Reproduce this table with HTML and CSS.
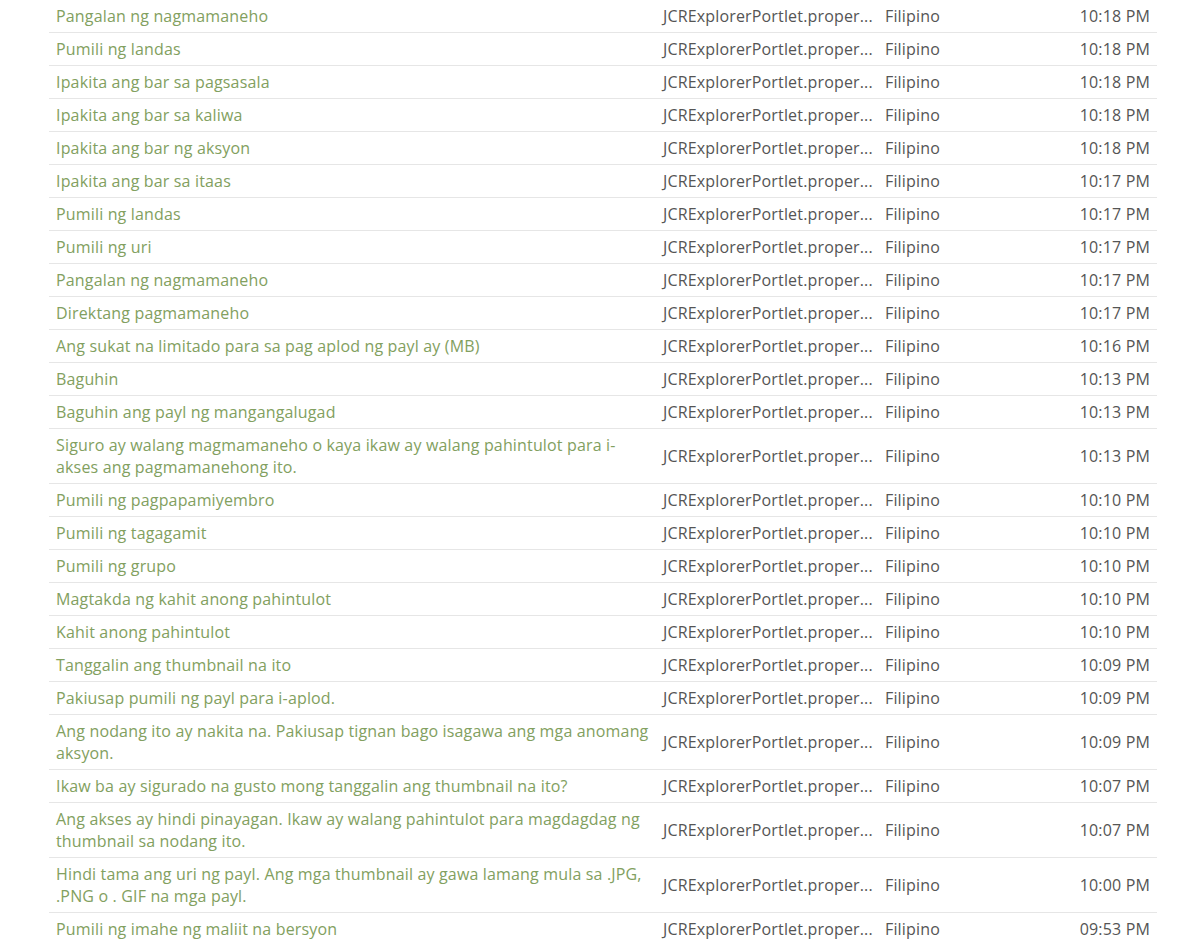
FILE: index.html
```html
<!DOCTYPE html>
<html>
<head>
<meta charset="utf-8">
<link rel="stylesheet" href="styles.css">
</head>
<body>
<div class="wrap">
<table class="list">
<colgroup><col class="c1"><col class="c2"><col class="c3"><col class="c4"></colgroup>
<tbody>
<tr><td class="key"><a href="#">Pangalan ng nagmamaneho</a></td><td class="file">JCRExplorerPortlet.proper...</td><td class="lang">Filipino</td><td class="time">10:18 PM</td></tr>
<tr><td class="key"><a href="#">Pumili ng landas</a></td><td class="file">JCRExplorerPortlet.proper...</td><td class="lang">Filipino</td><td class="time">10:18 PM</td></tr>
<tr><td class="key"><a href="#">Ipakita ang bar sa pagsasala</a></td><td class="file">JCRExplorerPortlet.proper...</td><td class="lang">Filipino</td><td class="time">10:18 PM</td></tr>
<tr><td class="key"><a href="#">Ipakita ang bar sa kaliwa</a></td><td class="file">JCRExplorerPortlet.proper...</td><td class="lang">Filipino</td><td class="time">10:18 PM</td></tr>
<tr><td class="key"><a href="#">Ipakita ang bar ng aksyon</a></td><td class="file">JCRExplorerPortlet.proper...</td><td class="lang">Filipino</td><td class="time">10:18 PM</td></tr>
<tr><td class="key"><a href="#">Ipakita ang bar sa itaas</a></td><td class="file">JCRExplorerPortlet.proper...</td><td class="lang">Filipino</td><td class="time">10:17 PM</td></tr>
<tr><td class="key"><a href="#">Pumili ng landas</a></td><td class="file">JCRExplorerPortlet.proper...</td><td class="lang">Filipino</td><td class="time">10:17 PM</td></tr>
<tr><td class="key"><a href="#">Pumili ng uri</a></td><td class="file">JCRExplorerPortlet.proper...</td><td class="lang">Filipino</td><td class="time">10:17 PM</td></tr>
<tr><td class="key"><a href="#">Pangalan ng nagmamaneho</a></td><td class="file">JCRExplorerPortlet.proper...</td><td class="lang">Filipino</td><td class="time">10:17 PM</td></tr>
<tr><td class="key"><a href="#">Direktang pagmamaneho</a></td><td class="file">JCRExplorerPortlet.proper...</td><td class="lang">Filipino</td><td class="time">10:17 PM</td></tr>
<tr><td class="key"><a href="#">Ang sukat na limitado para sa pag aplod ng payl ay (MB)</a></td><td class="file">JCRExplorerPortlet.proper...</td><td class="lang">Filipino</td><td class="time">10:16 PM</td></tr>
<tr><td class="key"><a href="#">Baguhin</a></td><td class="file">JCRExplorerPortlet.proper...</td><td class="lang">Filipino</td><td class="time">10:13 PM</td></tr>
<tr><td class="key"><a href="#">Baguhin ang payl ng mangangalugad</a></td><td class="file">JCRExplorerPortlet.proper...</td><td class="lang">Filipino</td><td class="time">10:13 PM</td></tr>
<tr><td class="key"><a href="#">Siguro ay walang magmamaneho o kaya ikaw ay walang pahintulot para i-akses ang pagmamanehong ito.</a></td><td class="file">JCRExplorerPortlet.proper...</td><td class="lang">Filipino</td><td class="time">10:13 PM</td></tr>
<tr><td class="key"><a href="#">Pumili ng pagpapamiyembro</a></td><td class="file">JCRExplorerPortlet.proper...</td><td class="lang">Filipino</td><td class="time">10:10 PM</td></tr>
<tr><td class="key"><a href="#">Pumili ng tagagamit</a></td><td class="file">JCRExplorerPortlet.proper...</td><td class="lang">Filipino</td><td class="time">10:10 PM</td></tr>
<tr><td class="key"><a href="#">Pumili ng grupo</a></td><td class="file">JCRExplorerPortlet.proper...</td><td class="lang">Filipino</td><td class="time">10:10 PM</td></tr>
<tr><td class="key"><a href="#">Magtakda ng kahit anong pahintulot</a></td><td class="file">JCRExplorerPortlet.proper...</td><td class="lang">Filipino</td><td class="time">10:10 PM</td></tr>
<tr><td class="key"><a href="#">Kahit anong pahintulot</a></td><td class="file">JCRExplorerPortlet.proper...</td><td class="lang">Filipino</td><td class="time">10:10 PM</td></tr>
<tr><td class="key"><a href="#">Tanggalin ang thumbnail na ito</a></td><td class="file">JCRExplorerPortlet.proper...</td><td class="lang">Filipino</td><td class="time">10:09 PM</td></tr>
<tr><td class="key"><a href="#">Pakiusap pumili ng payl para i-aplod.</a></td><td class="file">JCRExplorerPortlet.proper...</td><td class="lang">Filipino</td><td class="time">10:09 PM</td></tr>
<tr><td class="key"><a href="#">Ang nodang ito ay nakita na. Pakiusap tignan bago isagawa ang mga anomang aksyon.</a></td><td class="file">JCRExplorerPortlet.proper...</td><td class="lang">Filipino</td><td class="time">10:09 PM</td></tr>
<tr><td class="key"><a href="#">Ikaw ba ay sigurado na gusto mong tanggalin ang thumbnail na ito?</a></td><td class="file">JCRExplorerPortlet.proper...</td><td class="lang">Filipino</td><td class="time">10:07 PM</td></tr>
<tr><td class="key"><a href="#">Ang akses ay hindi pinayagan. Ikaw ay walang pahintulot para magdagdag ng thumbnail sa nodang ito.</a></td><td class="file">JCRExplorerPortlet.proper...</td><td class="lang">Filipino</td><td class="time">10:07 PM</td></tr>
<tr><td class="key"><a href="#">Hindi tama ang uri ng payl. Ang mga thumbnail ay gawa lamang mula sa .JPG, .PNG o . GIF na mga payl.</a></td><td class="file">JCRExplorerPortlet.proper...</td><td class="lang">Filipino</td><td class="time">10:00 PM</td></tr>
<tr><td class="key"><a href="#">Pumili ng imahe ng maliit na bersyon</a></td><td class="file">JCRExplorerPortlet.proper...</td><td class="lang">Filipino</td><td class="time">09:53 PM</td></tr>
</tbody>
</table>
</div>
</body>
</html>
```
FILE: styles.css
```css
html, body {
  margin: 0;
  padding: 0;
  background: #ffffff;
}
body {
  font-family: "Open Sans", "Liberation Sans", sans-serif;
  font-size: 16px;
  letter-spacing: 0.16px;
  color: #555555;
}
.wrap {
  padding: 0 38px 0 49px;
}
.list {
  width: 1108px;
  border-collapse: collapse;
  table-layout: fixed;
}
.c1 { width: 607px; }
.c2 { width: 222px; }
.c3 { width: 140px; }
.c4 { width: 139px; }
.list td {
  padding: 5px 7px 5px 7px;
  line-height: 22px;
  border-bottom: 1px solid #e6e6e6;
  vertical-align: middle;
}
.key a {
  color: #82a060;
  text-decoration: none;
}
.file, .lang {
  white-space: nowrap;
  overflow: hidden;
}
.time {
  text-align: right;
  white-space: nowrap;
}
```
